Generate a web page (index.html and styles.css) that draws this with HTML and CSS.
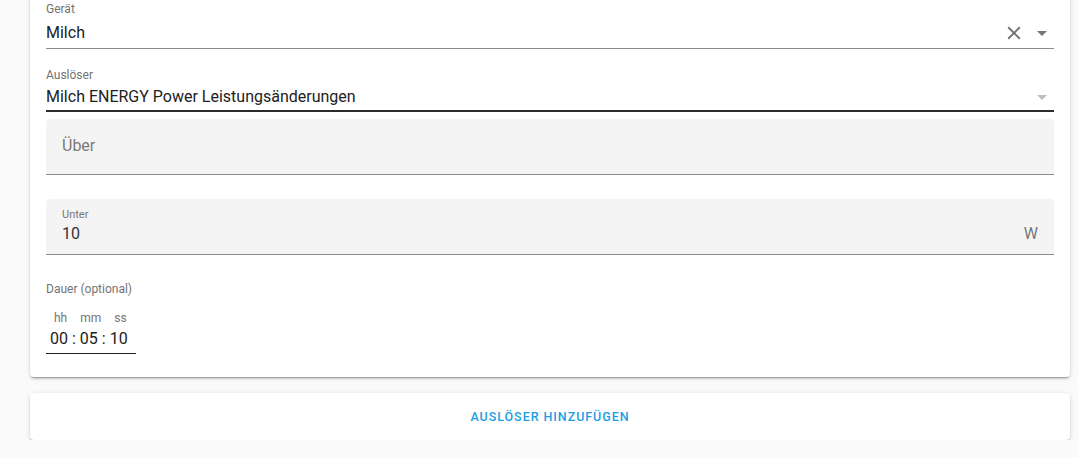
FILE: index.html
```html
<!DOCTYPE html>
<html lang="de">
<head>
<meta charset="utf-8">
<title>Auslöser</title>
<link rel="stylesheet" href="styles.css">
</head>
<body>
<div class="page">
  <div class="card main">
    <div class="field line-field">
      <div class="small-label">Gerät</div>
      <div class="value-row">
        <span class="value">Milch</span>
        <span class="icons">
          <svg class="clear" width="24" height="24" viewBox="0 0 24 24"><path d="M19 6.41 17.59 5 12 10.59 6.41 5 5 6.41 10.59 12 5 17.59 6.41 19 12 13.41 17.59 19 19 17.59 13.41 12z" fill="#6f6f6f"/></svg>
          <svg class="arrow" width="24" height="24" viewBox="0 0 24 24"><path d="M7 10l5 5 5-5z" fill="#757575"/></svg>
        </span>
      </div>
      <div class="underline gray"></div>
    </div>

    <div class="field line-field second">
      <div class="small-label">Auslöser</div>
      <div class="value-row">
        <span class="value">Milch ENERGY Power Leistungsänderungen</span>
        <span class="icons">
          <svg class="arrow" width="24" height="24" viewBox="0 0 24 24"><path d="M7 10l5 5 5-5z" fill="#bdbdbd"/></svg>
        </span>
      </div>
      <div class="underline dark"></div>
    </div>

    <div class="filled empty">
      <span class="placeholder">Über</span>
    </div>

    <div class="filled withvalue">
      <div class="small-label">Unter</div>
      <div class="filled-row">
        <span class="value">10</span>
        <span class="suffix">W</span>
      </div>
    </div>

    <div class="duration">
      <div class="duration-label">Dauer (optional)</div>
      <div class="time">
        <div class="units">
          <span class="u hh">hh</span>
          <span class="u mm">mm</span>
          <span class="u ss">ss</span>
        </div>
        <div class="digits">
          <span>00</span><span class="colon">:</span><span>05</span><span class="colon">:</span><span>10</span>
        </div>
      </div>
    </div>
  </div>

  <div class="card add">
    <button class="add-btn">Auslöser hinzufügen</button>
  </div>
</div>
</body>
</html>
```

FILE: styles.css
```css
* { box-sizing: border-box; }
html, body {
  margin: 0;
  padding: 0;
  background: #fafafa;
  font-family: Roboto, "Noto Sans", sans-serif;
  color: #212121;
  overflow: hidden;
}
.page {
  padding: 0 8px 0 30px;
}
.card {
  background: #fff;
  border-radius: 4px;
  box-shadow: 0 2px 2px 0 rgba(0,0,0,.14), 0 1px 5px 0 rgba(0,0,0,.12), 0 3px 1px -2px rgba(0,0,0,.2);
}
.main {
  margin-top: -10px;
  padding: 12px 16px 23px;
}
.small-label {
  font-size: 12px;
  line-height: 14px;
  color: #737373;
}
.value-row {
  display: flex;
  align-items: center;
  height: 24px;
  margin-top: 5px;
}
.value {
  font-size: 16px;
  line-height: 24px;
  color: #212121;
  flex: 1;
}
.icons {
  display: flex;
  align-items: center;
  gap: 5px;
}
.icons svg { display: block; }
.clear { width: 22px; height: 22px; }
.underline {
  height: 1px;
  margin-top: 3px;
}
.underline.gray { background: #8a8a8a; }
.underline.dark { background: #2b2b2b; height: 1.5px; margin-top: 1px; }
.second {
  margin-top: 19px;
}
.second .value-row { margin-top: 3px; }
.filled {
  background: #f4f4f4;
  border-radius: 4px 4px 0 0;
  border-bottom: 1px solid #8c8c8c;
  height: 56px;
  padding: 0 16px;
}
.empty {
  margin-top: 7px;
  display: flex;
  align-items: center;
}
.placeholder {
  font-size: 16px;
  color: #7a7a7a;
  margin-top: -2px;
}
.withvalue {
  margin-top: 24px;
  padding-top: 9px;
}
.withvalue .small-label {
  font-size: 11px;
  color: #767676;
}
.filled-row {
  display: flex;
  align-items: center;
  height: 24px;
}
.filled-row .value { color: #333; }
.suffix {
  font-size: 16px;
  color: #777;
}
.duration {
  padding-top: 27px;
}
.duration-label {
  font-size: 12px;
  line-height: 14px;
  color: #737373;
}
.time {
  display: inline-block;
  margin-top: 15px;
  border-bottom: 1px solid #212121;
  padding: 0 8px 4px 4px;
}
.units {
  display: flex;
  font-size: 12px;
  line-height: 14px;
  color: #737373;
  padding-left: 4px;
}
.units .mm { margin-left: 13px; }
.units .ss { margin-left: 13px; }
.digits {
  display: flex;
  font-size: 16px;
  line-height: 20px;
  margin-top: 4px;
  color: #212121;
}
.colon { margin: 0 4px; }
.add {
  margin-top: 16px;
  height: 47px;
  display: flex;
  align-items: center;
  justify-content: center;
}
.add-btn {
  border: 0;
  background: transparent;
  font-family: Roboto, sans-serif;
  font-size: 12.5px;
  font-weight: 500;
  letter-spacing: 0.95px;
  text-transform: uppercase;
  color: #1e9ee2;
  padding: 0;
}
```
